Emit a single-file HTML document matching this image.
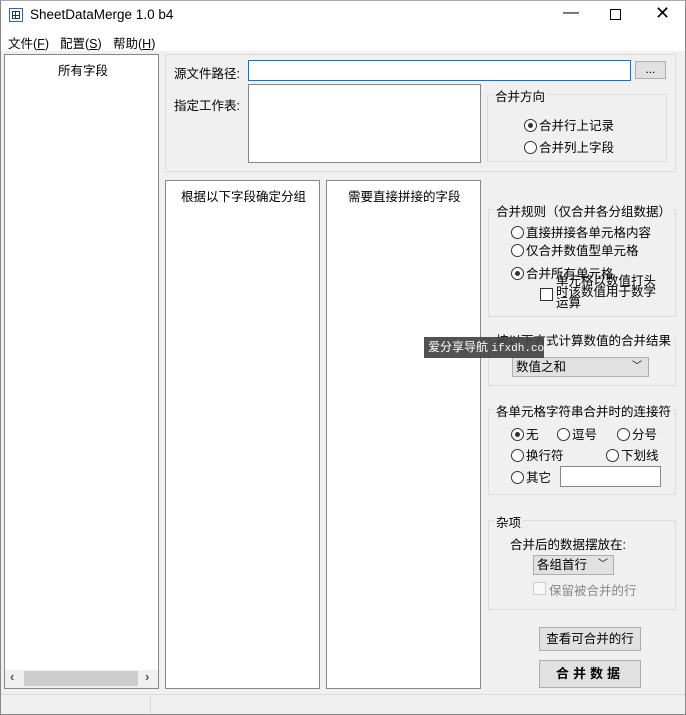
<!DOCTYPE html>
<html><head><meta charset="utf-8"><style>
*{box-sizing:border-box;margin:0;padding:0}
body{width:686px;height:715px;background:#f0f0f0;font-family:"Liberation Sans","Noto Sans CJK SC",sans-serif;font-size:12px;color:#000;position:relative;overflow:hidden}
.a{position:absolute;white-space:nowrap}
.w{background:#fff;border:1px solid #828790}
.g{border:1px solid #dcdcdc}
.lg{background:#f0f0f0;padding:0 2px;font-size:12.5px}
.r{width:13px;height:13px;border:1px solid #333;border-radius:50%;background:#fff;display:inline-block;vertical-align:-2px;margin-right:2px;position:relative}
.r.on::after{content:"";position:absolute;left:3px;top:3px;width:5px;height:5px;border-radius:50%;background:#333}
.btn{background:#e1e1e1;border:1px solid #adadad;text-align:center}
</style></head><body>
<div class="a" style="left:0;top:0;width:686px;height:31px;background:#fff"></div>
<div class="a" style="left:9px;top:8px;width:14px;height:14px;border:1px solid #1e6fb6;background:#fff"><div style="position:absolute;left:2px;top:2px;width:8px;height:8px;border:1px solid #333;background:linear-gradient(#333,#333) 2px 0/1px 8px no-repeat,linear-gradient(#333,#333) 0 3px/8px 1px no-repeat"></div></div>
<div class="a" style="left:30px;top:7px;font-size:13.5px">SheetDataMerge 1.0 b4</div>
<div class="a" style="left:563px;top:4px;font-size:16px">—</div>
<div class="a" style="left:610px;top:9px;width:11px;height:11px;border:1px solid #000"></div>
<div class="a" style="left:655px;top:3px;font-size:18px">✕</div>
<div class="a" style="left:0;top:31px;width:686px;height:20px;background:#fff"></div>
<div class="a" style="left:8px;top:33px;font-size:12.5px">文件(<u>F</u>)</div>
<div class="a" style="left:60px;top:33px;font-size:12.5px">配置(<u>S</u>)</div>
<div class="a" style="left:113px;top:33px;font-size:12.5px">帮助(<u>H</u>)</div>

<div class="a w" style="left:4px;top:54px;width:155px;height:635px"></div>
<div class="a" style="left:58px;top:60px;font-size:12.5px">所有字段</div>
<div class="a" style="left:5px;top:670px;width:153px;height:18px;background:#f0f0f0"></div>
<div class="a" style="left:24px;top:671px;width:114px;height:15px;background:#cdcdcd"></div>
<div class="a" style="left:10px;top:669px;font-size:13px;color:#555;font-weight:bold">‹</div>
<div class="a" style="left:145px;top:669px;font-size:13px;color:#555;font-weight:bold">›</div>

<div class="a g" style="left:165px;top:54px;width:511px;height:118px"></div>
<div class="a" style="left:174px;top:63px;font-size:12.5px">源文件路径:</div>
<div class="a" style="left:248px;top:60px;width:383px;height:21px;background:#fff;border:1px solid #0078d7"></div>
<div class="a btn" style="left:635px;top:61px;width:31px;height:18px;line-height:14px">...</div>
<div class="a" style="left:174px;top:95px;font-size:12.5px">指定工作表:</div>
<div class="a w" style="left:248px;top:84px;width:233px;height:79px"></div>
<div class="a g" style="left:487px;top:94px;width:180px;height:68px"></div>
<div class="a lg" style="left:493px;top:86px">合并方向</div>
<div class="a" style="left:524px;top:115px;font-size:12.5px"><span class="r on"></span>合并行上记录</div>
<div class="a" style="left:524px;top:137px;font-size:12.5px"><span class="r"></span>合并列上字段</div>

<div class="a w" style="left:165px;top:180px;width:155px;height:509px"></div>
<div class="a" style="left:181px;top:186px;font-size:12.5px">根据以下字段确定分组</div>
<div class="a w" style="left:326px;top:180px;width:155px;height:509px"></div>
<div class="a" style="left:348px;top:186px;font-size:12.5px">需要直接拼接的字段</div>

<div class="a g" style="left:488px;top:209px;width:188px;height:108px"></div>
<div class="a lg" style="left:494px;top:201px">合并规则（仅合并各分组数据）</div>
<div class="a" style="left:511px;top:222px;font-size:12.5px"><span class="r"></span>直接拼接各单元格内容</div>
<div class="a" style="left:511px;top:240px;font-size:12.5px"><span class="r"></span>仅合并数值型单元格</div>
<div class="a" style="left:511px;top:263px;font-size:12.5px"><span class="r on"></span>合并所有单元格</div>
<div class="a" style="left:556px;top:276px;font-size:12.5px;line-height:11px">单元格以数值打头<br>时该数值用于数学<br>运算</div>
<div class="a" style="left:540px;top:288px;width:13px;height:13px;border:1px solid #333;background:#fff"></div>

<div class="a g" style="left:488px;top:338px;width:188px;height:48px"></div>
<div class="a lg" style="left:494px;top:330px">按以下方式计算数值的合并结果</div>
<div class="a btn" style="left:512px;top:357px;width:137px;height:20px;text-align:left;padding-left:3px;line-height:18px;font-size:12.5px">数值之和<span style="position:absolute;right:6px;top:0;font-size:10px">﹀</span></div>
<div class="a" style="left:424px;top:337px;width:120px;height:21px;background:#444;color:#fff;padding-left:4px;line-height:21px;font-size:12px;opacity:.92;overflow:hidden">爱分享导航 <span style="font-family:'Liberation Mono',monospace;font-size:11px">ifxdh.com</span></div>

<div class="a g" style="left:488px;top:409px;width:188px;height:86px"></div>
<div class="a lg" style="left:494px;top:401px">各单元格字符串合并时的连接符</div>
<div class="a" style="left:511px;top:424px;font-size:12.5px"><span class="r on"></span>无</div>
<div class="a" style="left:557px;top:424px;font-size:12.5px"><span class="r"></span>逗号</div>
<div class="a" style="left:617px;top:424px;font-size:12.5px"><span class="r"></span>分号</div>
<div class="a" style="left:511px;top:445px;font-size:12.5px"><span class="r"></span>换行符</div>
<div class="a" style="left:606px;top:445px;font-size:12.5px"><span class="r"></span>下划线</div>
<div class="a" style="left:511px;top:467px;font-size:12.5px"><span class="r"></span>其它</div>
<div class="a w" style="left:560px;top:466px;width:101px;height:21px"></div>

<div class="a g" style="left:488px;top:520px;width:188px;height:90px"></div>
<div class="a lg" style="left:494px;top:512px">杂项</div>
<div class="a" style="left:510px;top:534px;font-size:12.5px">合并后的数据摆放在:</div>
<div class="a btn" style="left:533px;top:555px;width:81px;height:20px;text-align:left;padding-left:3px;line-height:18px;font-size:12.5px">各组首行<span style="position:absolute;right:5px;top:0;font-size:10px">﹀</span></div>
<div class="a" style="left:533px;top:582px;width:13px;height:13px;border:1px solid #ccc;background:#f8f8f8"></div>
<div class="a" style="left:549px;top:580px;font-size:12.5px;color:#888">保留被合并的行</div>

<div class="a btn" style="left:539px;top:627px;width:102px;height:24px;line-height:22px;font-size:12.5px">查看可合并的行</div>
<div class="a btn" style="left:539px;top:660px;width:102px;height:28px;line-height:26px;font-size:13px;font-weight:bold;letter-spacing:4px">合并数据</div>

<div class="a" style="left:0;top:694px;width:686px;height:21px;border-top:1px solid #dadada;background:#f0f0f0"></div>
<div class="a" style="left:150px;top:696px;width:1px;height:18px;background:#dadada"></div>
<div class="a" style="left:0;top:0;width:686px;height:715px;border:1px solid #888;border-top-color:#aaa"></div>
</body></html>
